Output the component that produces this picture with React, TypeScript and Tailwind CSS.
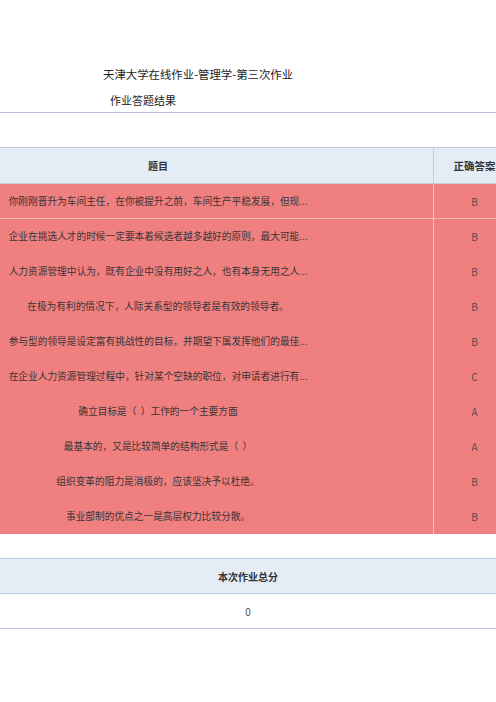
const rows = [
  { q: "你刚刚晋升为车间主任，在你被提升之前，车间生产平稳发展，但现...", a: "B" },
  { q: "企业在挑选人才的时候一定要本着候选者越多越好的原则，最大可能...", a: "B" },
  { q: "人力资源管理中认为，既有企业中没有用好之人，也有本身无用之人...", a: "B" },
  { q: "在极为有利的情况下，人际关系型的领导者是有效的领导者。", a: "B" },
  { q: "参与型的领导是设定富有挑战性的目标，并期望下属发挥他们的最佳...", a: "B" },
  { q: "在企业人力资源管理过程中，针对某个空缺的职位，对申请者进行有...", a: "C" },
  { q: "确立目标是（\u00a0\u00a0）工作的一个主要方面", a: "A" },
  { q: "最基本的，又是比较简单的结构形式是（\u00a0\u00a0）", a: "A" },
  { q: "组织变革的阻力是消极的，应该坚决予以杜绝。", a: "B" },
  { q: "事业部制的优点之一是高层权力比较分散。", a: "B" },
];

export default function App() {
  return (
    <div className="h-screen w-full overflow-hidden bg-white font-['Noto_Sans_CJK_SC','Noto_Sans',sans-serif] text-[#333]">
      {/* title */}
      <div className="border-b border-[#bcc0dc] pt-[66px] pb-[4px]">
        <div className="pl-[103px] text-[11.4px] leading-[16px] text-[#222]">
          天津大学在线作业-管理学-第三次作业
        </div>
        <div className="mt-[10px] pl-[110px] text-[11px] leading-[16px] text-[#222]">
          作业答题结果
        </div>
      </div>

      {/* answers table */}
      <div className="mt-[34px] -ml-[117px] w-[632px] text-[9.7px]">
        <div className="flex h-[37px] border-y border-[#c3cbd8] bg-[#e4edf6] text-[10px] font-bold">
          <div className="flex w-[550px] items-center justify-center">题目</div>
          <div className="flex w-[82px] items-center justify-center border-l border-[#c3cbd8] text-[10.5px]">
            正确答案
          </div>
        </div>
        {rows.map((r, i) => (
          <div
            key={i}
            className={
              i === 0
                ? "flex h-[35px] border-b border-[#efb8c0] bg-[#f08080]"
                : "flex h-[35px] bg-[#f08080]"
            }
          >
            <div className="flex w-[550px] items-center justify-center text-[#3a3434]">{r.q}</div>
            <div className="flex w-[82px] items-center justify-center border-l border-[#e9c8d2] text-[10px] text-[#5a4a4a]">
              {r.a}
            </div>
          </div>
        ))}
      </div>

      {/* total score */}
      <div className="mt-[24px] text-[10px]">
        <div className="flex h-[36px] items-center justify-center border-y border-[#bcc6e0] bg-[#e4edf6] font-bold">
          本次作业总分
        </div>
        <div className="flex h-[35px] items-center justify-center border-b border-[#bcc0dc] text-[#555]">
          0
        </div>
      </div>
    </div>
  );
}
